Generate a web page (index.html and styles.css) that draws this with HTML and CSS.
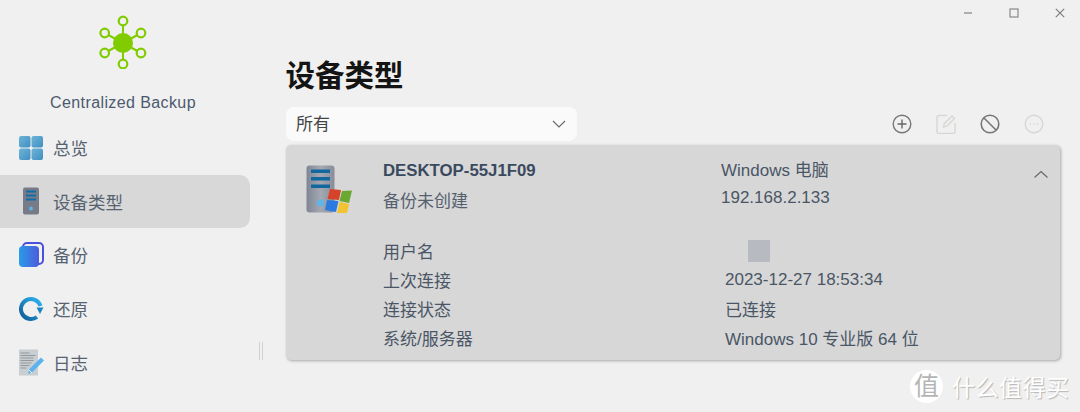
FILE: index.html
```html
<!DOCTYPE html>
<html lang="zh-CN">
<head>
    <meta charset="UTF-8">
    <title>Centralized Backup</title>
    <link rel="stylesheet" href="styles.css">
</head>
<body>
    <div class="window-controls">
        <svg width="12" height="12" viewBox="0 0 12 12"><path d="M2 6h8" stroke="#8a8a8a" stroke-width="1.3"/></svg>
        <svg width="12" height="12" viewBox="0 0 12 12"><rect x="2" y="2" width="8" height="8" fill="none" stroke="#8a8a8a" stroke-width="1.2"/></svg>
        <svg width="12" height="12" viewBox="0 0 12 12"><path d="M1.8 1.8l8.4 8.4M10.2 1.8l-8.4 8.4" stroke="#7a7a7a" stroke-width="1.1"/></svg>
    </div>

    <aside class="sidebar">
        <div class="brand">
            <svg class="brand-logo" width="50" height="54" viewBox="0 0 50 54">
                <g stroke="#80cc00" stroke-width="2" fill="none">
                    <path d="M25 6v43M6.700 18l36.300 20M43 18L6.700 38"/>
                </g>
                <g stroke="#80cc00" stroke-width="2.200" fill="#f0f0f0">
                    <circle cx="25" cy="6" r="4.300"/>
                    <circle cx="6.700" cy="18" r="4.300"/>
                    <circle cx="43" cy="18" r="4.300"/>
                    <circle cx="6.700" cy="38" r="4.300"/>
                    <circle cx="43" cy="38" r="4.300"/>
                    <circle cx="25" cy="49" r="4.300"/>
                </g>
                <circle cx="25" cy="28" r="10" fill="#80cc00"/>
            </svg>
            <div class="brand-name">Centralized Backup</div>
        </div>
        <nav class="nav">
            <a class="nav-item">
                <svg class="nav-icon" width="26" height="26" viewBox="0 0 26 26">
                    <defs>
                        <linearGradient id="tile" x1="0" y1="0" x2="1" y2="1"><stop offset="0" stop-color="#6fb4d6"/><stop offset="1" stop-color="#3f8fc4"/></linearGradient>
                    </defs>
                    <rect x="1" y="1" width="11.500" height="11.500" rx="2" fill="url(#tile)"/>
                    <rect x="13.500" y="1" width="11.500" height="11.500" rx="2" fill="url(#tile)"/>
                    <rect x="1" y="13.500" width="11.500" height="11.500" rx="2" fill="url(#tile)"/>
                    <rect x="13.500" y="13.500" width="11.500" height="11.500" rx="2" fill="url(#tile)"/>
                </svg>
                <span>总览</span>
            </a>
            <a class="nav-item active">
                <svg class="nav-icon" width="26" height="28" viewBox="0 0 26 28">
                    <rect x="5" y="0.500" width="16" height="27" rx="2" fill="#767b87"/>
                    <path d="M8 3.500h10v2H8zM8 7.500h10v2H8zM8 11.500h10v2H8z" fill="#0f6ea8"/>
                    <circle cx="13" cy="21.500" r="2" fill="#5fb2e6"/>
                </svg>
                <span>设备类型</span>
            </a>
            <a class="nav-item">
                <svg class="nav-icon" width="26" height="26" viewBox="0 0 26 26">
                    <defs>
                        <linearGradient id="copy" x1="0" y1="0" x2="1" y2="0"><stop offset="0" stop-color="#2a9be8"/><stop offset="1" stop-color="#4b5bdc"/></linearGradient>
                    </defs>
                    <rect x="5" y="1" width="20" height="21" rx="4" fill="none" stroke="#4a4fdc" stroke-width="2"/>
                    <rect x="1" y="4" width="20" height="21" rx="4" fill="url(#copy)"/>
                </svg>
                <span>备份</span>
            </a>
            <a class="nav-item">
                <svg class="nav-icon" width="26" height="26" viewBox="0 0 26 26">
                    <defs>
                        <linearGradient id="spin" x1="1" y1="0" x2="0" y2="1"><stop offset="0" stop-color="#2cb4f2"/><stop offset="1" stop-color="#0e5c94"/></linearGradient>
                    </defs>
                    <path d="M22.500 10A10 10 0 1 0 19 21" fill="none" stroke="url(#spin)" stroke-width="4"/>
                    <path d="M18.500 11.500h7l-3.500 6.500z" fill="#1a84c4"/>
                </svg>
                <span>还原</span>
            </a>
            <a class="nav-item">
                <svg class="nav-icon log-icon" width="27" height="27" viewBox="0 0 27 27">
                    <rect x="1" y="0.500" width="19" height="26" fill="#c8ced2"/>
                    <path d="M2.500 4h9M2.500 6.500h15M2.500 9h13M2.500 11.500h13M2.500 14h11M2.500 16.500h9M2.500 19h6" stroke="#94989c" stroke-width="1.100"/>
                    <path d="M10 25l1.500-5L23 8.500l3 3L14.500 23z" fill="#5cb2ee"/>
                    <path d="M11 21l3 3" stroke="#e4f0f8" stroke-width="1"/>
                </svg>
                <span>日志</span>
            </a>
        </nav>
    </aside>

    <div class="resize-handle"></div>

    <main class="content">
        <h1 class="page-title">设备类型</h1>

        <div class="toolbar">
            <div class="select">
                <span>所有</span>
                <svg width="14" height="8" viewBox="0 0 14 8"><path d="M1 1l6 6 6-6" fill="none" stroke="#666" stroke-width="1.100"/></svg>
            </div>
            <div class="actions">
                <svg width="20" height="20" viewBox="0 0 20 20"><circle cx="10" cy="10" r="8.800" fill="none" stroke="#777" stroke-width="1.400"/><path d="M10 5.500v9M5.500 10h9" stroke="#666" stroke-width="1.400"/></svg>
                <svg width="20" height="20" viewBox="0 0 20 20"><path d="M11 1.500H3a2 2 0 0 0-2 2v14a2 2 0 0 0 2 2h14a2 2 0 0 0 2-2V9" fill="none" stroke="#d8d6d2" stroke-width="1.400"/><path d="M7.500 13l.8-3.500L16 2l2.500 2.500L11 12z" fill="none" stroke="#d8d6d2" stroke-width="1.400"/></svg>
                <svg width="20" height="20" viewBox="0 0 20 20"><circle cx="10" cy="10" r="8.800" fill="none" stroke="#777" stroke-width="1.600"/><path d="M4 4l12 12" stroke="#777" stroke-width="1.600"/></svg>
                <svg width="20" height="20" viewBox="0 0 20 20"><circle cx="10" cy="10" r="8.800" fill="none" stroke="#d8d6d2" stroke-width="1.400"/><path d="M6 10h1M9.500 10h1M13 10h1" stroke="#d0cec9" stroke-width="1.300"/></svg>
            </div>
        </div>

        <section class="device-card">
            <svg class="device-icon" width="46" height="48" viewBox="0 0 46 48">
                <defs>
                    <linearGradient id="tower" x1="0" y1="0" x2="1" y2="0"><stop offset="0" stop-color="#7f8594"/><stop offset="0.500" stop-color="#a4a8b2"/><stop offset="1" stop-color="#888d99"/></linearGradient>
                </defs>
                <rect x="0.500" y="0.500" width="28" height="47" rx="3" fill="url(#tower)"/>
                <path d="M5 4.500h19v3.500H5zM5 12h19v3.500H5zM5 19.500h19v3.500H5z" fill="#11689f"/>
                <circle cx="14.500" cy="38" r="3.500" fill="#5cb6ea"/>
                <path d="M24 24l11 1-2 10-11.500-1z" fill="#d6432a"/>
                <path d="M36 26l10-.5-3 12.500-9.500-2z" fill="#6aa832"/>
                <path d="M21 35l11.500 1-2.500 11-11-2z" fill="#2a7be0"/>
                <path d="M33.500 37l9.500 2-2 9-10 0z" fill="#f2c230"/>
            </svg>
            <div class="device-summary">
                <div class="device-name">DESKTOP-55J1F09</div>
                <div class="device-type">Windows 电脑</div>
                <div class="device-state">备份未创建</div>
                <div class="device-ip">192.168.2.133</div>
            </div>
            <svg class="collapse" width="14" height="9" viewBox="0 0 14 9"><path d="M.5 7.500L7 1.500l6.500 6" fill="none" stroke="#666" stroke-width="1.100"/></svg>

            <dl class="details">
                <dt>用户名</dt>
                <dd><span class="redacted"></span></dd>
                <dt>上次连接</dt>
                <dd>2023-12-27 18:53:34</dd>
                <dt>连接状态</dt>
                <dd>已连接</dd>
                <dt>系统/服务器</dt>
                <dd>Windows 10 专业版 64 位</dd>
            </dl>
        </section>
    </main>

    <div class="watermark">
        <span class="watermark-badge">值</span>
        <span class="watermark-text">什么值得买</span>
    </div>
</body>
</html>
```

FILE: styles.css
```css
* {
    box-sizing: border-box;
}

html, body {
    height: 100%;
}

body {
    margin: 0;
    display: flex;
    height: 412px;
    overflow: hidden;
    position: relative;
    background-color: #f0f0f0;
    font-family: "Liberation Sans", "Noto Sans CJK SC", sans-serif;
    color: #4a5666;
}

svg {
    display: block;
    flex: none;
}

/* window buttons */
.window-controls {
    position: absolute;
    top: 7px;
    right: 14px;
    display: flex;
    gap: 34px;
}

/* sidebar */
.sidebar {
    width: 250px;
    flex: none;
}

.brand {
    padding-top: 15px;
    width: 246px;
    display: flex;
    flex-direction: column;
    align-items: center;
}

.brand-name {
    margin-top: 24px;
    font-size: 16px;
    line-height: 20px;
    letter-spacing: 0.4px;
    color: #4b5a6e;
}

.nav {
    margin-top: 8px;
}

.nav-item {
    display: flex;
    align-items: center;
    height: 53.600px;
    padding-left: 18px;
    font-size: 17.500px;
    color: #566270;
    border-radius: 0 10px 10px 0;
}

.nav-item.active {
    background-color: #d8d8d8;
}

.nav-icon {
    margin-right: 9px;
}

.log-icon {
    margin-right: 8px;
}

.resize-handle {
    position: absolute;
    left: 259px;
    top: 342px;
    width: 4px;
    height: 18px;
    border-left: 1px solid #d0d0d0;
    border-right: 1px solid #d0d0d0;
}

/* main area */
.content {
    flex: 1;
    padding: 57px 20px 0 35.500px;
}

.page-title {
    margin: 0;
    font-size: 29.500px;
    line-height: 38px;
    font-weight: 700;
    color: #141414;
}

.toolbar {
    margin: 12px 0 0 0.500px;
    display: flex;
    align-items: center;
    justify-content: space-between;
}

.select {
    width: 291px;
    height: 34px;
    padding: 0 11px 3px 10px;
    display: flex;
    align-items: center;
    justify-content: space-between;
    background-color: #fafafa;
    border-radius: 8px;
    font-size: 17px;
    color: #444;
}

.select svg {
    margin-top: 3px;
}

.actions {
    display: flex;
    gap: 24px;
    padding-right: 16px;
}

.device-card {
    position: relative;
    margin: 4px 0 0 0.500px;
    height: 215px;
    padding: 9px 20px 0 20px;
    display: flex;
    flex-wrap: wrap;
    align-content: flex-start;
    background-color: #d7d7d7;
    border-radius: 5px;
    box-shadow: 1px 1px 3px rgba(0, 0, 0, 0.3);
}

.device-icon {
    margin-top: 11px;
    margin-right: 31px;
}

.device-summary {
    display: grid;
    grid-template-columns: 338px auto;
    grid-auto-rows: 30px;
    align-items: center;
    font-size: 17px;
}

.device-name {
    padding-top: 4px;
    font-weight: 700;
    font-size: 16.800px;
    color: #3a4a5e;
}

.device-type {
    padding-bottom: 2px;
}

.device-state {
    color: #55606e;
}

.device-ip {
    padding-bottom: 2px;
}

.collapse {
    position: absolute;
    top: 25px;
    right: 12px;
}

.details {
    width: 100%;
    margin: 22px 0 0 77px;
    display: grid;
    grid-template-columns: 342px auto;
    grid-auto-rows: 29px;
    align-items: center;
    font-size: 17px;
}

.details dt,
.details dd {
    margin: 0;
}

.redacted {
    display: block;
    width: 22px;
    height: 22px;
    margin-left: 23px;
    background-color: #b7bac0;
}

.watermark {
    position: absolute;
    left: 910px;
    top: 369px;
    display: flex;
    align-items: center;
    gap: 9px;
    color: #fff;
    text-shadow: 1px 1px 1px rgba(0, 0, 0, 0.25);
}

.watermark-badge {
    width: 33px;
    height: 33px;
    border-radius: 50%;
    background-color: #fff;
    color: #b5b5b5;
    text-shadow: none;
    font-size: 25px;
    line-height: 32px;
    text-align: center;
}

.watermark-text {
    font-size: 23px;
    letter-spacing: 0.500px;
}
```
